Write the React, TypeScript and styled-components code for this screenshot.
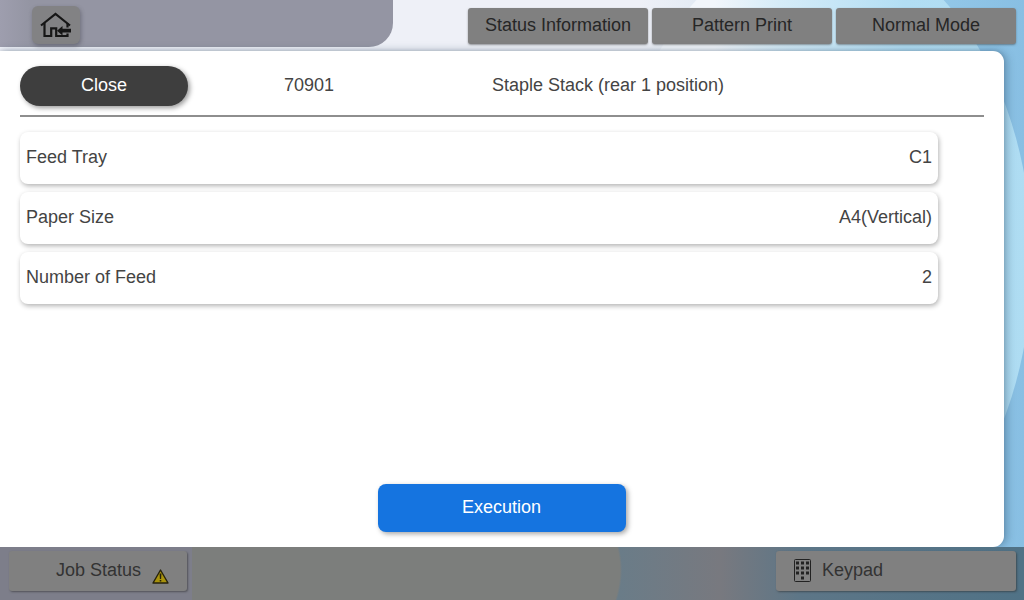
import React from "react";
import styled, { createGlobalStyle } from "styled-components";

const Global = createGlobalStyle`
  html, body { margin: 0; padding: 0; width: 1024px; height: 600px; overflow: hidden; }
  body { font-family: "Liberation Sans", Arial, sans-serif; }
`;

const Screen = styled.div`
  width: 1024px;
  height: 600px;
  display: grid;
  grid-template-rows: 51px 496px 53px;
  background: linear-gradient(90deg, #eef0f7 0 640px, #dfe9f3 720px, #98cbea 900px, #88bfe3 1024px);
  position: relative;
  overflow: hidden;

  &::before {
    content: "";
    position: absolute;
    left: 608px;
    top: -60px;
    width: 424px;
    height: 640px;
    border-radius: 50%;
    background: linear-gradient(90deg, #f2f6fb 25%, #d6ecf8 40%, #b2def4 70%, #aedcf2 100%);
  }
`;

const TopBar = styled.header`
  display: flex;
  justify-content: space-between;
  align-items: flex-start;
  padding-right: 8px;
  position: relative;
`;

const HomeTab = styled.div`
  width: 393px;
  height: 47px;
  box-sizing: border-box;
  padding: 6px 0 0 32px;
  background: linear-gradient(90deg, #9e9eae 0, #9495a3 30px);
  border-bottom-right-radius: 24px;
`;

const HomeButton = styled.button`
  width: 48px;
  height: 38px;
  padding: 0;
  border: 0;
  border-radius: 6px;
  background: #828284;
  box-shadow: 1px 2px 4px rgba(60, 60, 70, 0.45);
  display: flex;
  align-items: center;
  justify-content: center;
`;

const TopActions = styled.nav`
  display: flex;
  gap: 4px;
  padding-top: 8px;
`;

const TopButton = styled.button`
  width: 180px;
  height: 36px;
  padding: 0 0 2px;
  border: 0;
  border-radius: 3px;
  background: #808080;
  box-shadow: 0 1px 2px rgba(60, 60, 60, 0.5);
  color: #262626;
  font: 18px "Liberation Sans", Arial, sans-serif;
`;

const Panel = styled.main`
  width: 1004px;
  box-sizing: border-box;
  background: #fff;
  border-radius: 0 11px 11px 0;
  box-shadow: 3px 0 8px rgba(30, 60, 90, 0.35), 0 -1px 3px rgba(30, 40, 60, 0.12);
  padding: 15px 20px;
  display: flex;
  flex-direction: column;
  position: relative;
  z-index: 1;
`;

const Header = styled.div`
  display: flex;
  align-items: flex-start;
  height: 49px;
  border-bottom: 2px solid #8e8e8e;
`;

const CloseButton = styled.button`
  width: 168px;
  height: 40px;
  padding: 0 0 2px;
  border: 0;
  border-radius: 20px;
  background: #3e3e3e;
  box-shadow: 2px 2px 5px rgba(0, 0, 0, 0.4);
  color: #fff;
  font: 18px "Liberation Sans", Arial, sans-serif;
`;

const HeaderText = styled.span`
  font-size: 18px;
  line-height: 38px;
  color: #444;
`;

const HeaderId = styled(HeaderText)`
  margin-left: 96px;
  width: 208px;
`;

const Rows = styled.div`
  display: flex;
  flex-direction: column;
  gap: 8px;
  width: 918px;
  margin-top: 15px;
`;

const Row = styled.div`
  height: 52px;
  box-sizing: border-box;
  padding: 0 6px 2px;
  background: #fff;
  border-radius: 8px;
  box-shadow: 1px 2px 5px rgba(0, 0, 0, 0.3);
  display: flex;
  align-items: center;
  justify-content: space-between;
  font-size: 18px;
  color: #444;
`;

const Footer = styled.div`
  margin-top: auto;
  display: flex;
  justify-content: center;
`;

const ExecuteButton = styled.button`
  width: 248px;
  height: 48px;
  padding: 0 1px 2px 0;
  border: 0;
  border-radius: 8px;
  background: #1574e0;
  box-shadow: 2px 2px 5px rgba(0, 0, 0, 0.35);
  color: #fff;
  font: 18px "Liberation Sans", Arial, sans-serif;
`;

const BottomBar = styled.footer`
  display: flex;
  justify-content: space-between;
  align-items: flex-start;
  padding: 4px 8px 0 9px;
  position: relative;
  z-index: 1;
  background:
    linear-gradient(90deg, #7d7e8a 0 192px, transparent 192px),
    radial-gradient(ellipse 430px 200px at 192px 23px, #7c7e7c 99.5%, transparent 100%),
    linear-gradient(90deg, #6a7c88 620px, #78797f 720px, #5d7687 800px, #507286 1024px);
`;

const BottomButton = styled.button`
  height: 40px;
  box-sizing: border-box;
  border: 0;
  border-radius: 3px;
  background: #808080;
  box-shadow: 1px 1px 2px rgba(40, 40, 40, 0.5);
  color: #333;
  font: 18px "Liberation Sans", Arial, sans-serif;
  display: flex;
  align-items: center;
`;

const JobButton = styled(BottomButton)`
  width: 178px;
  padding: 0 0 2px 47px;
  gap: 11px;
`;

const KeypadButton = styled(BottomButton)`
  width: 240px;
  padding: 0 0 2px 18px;
  gap: 11px;
`;

const WarnMark = styled.svg`
  margin-top: 13px;
`;

const KeypadMark = styled.svg`
  margin-top: 1px;
`;

const HomeIcon = () => (
  <svg width="32" height="26" viewBox="0 0 32 26" fill="none" stroke="#161616" strokeWidth="2.2">
    <path d="M1 13.5 L15.5 2 L30 13.5" />
    <path d="M4.5 11 V24 H11.2 V16.3 H16.2 V24 H27.5 V21.5 M27.5 15.5 V11" />
    <path d="M17 18.7 L22.5 14 V16.8 H31 V20.6 H22.5 V23.4 Z" fill="#161616" stroke="none" />
  </svg>
);

const WarnIcon = () => (
  <WarnMark width="17" height="15" viewBox="0 0 17 15">
    <path d="M8.5 1 L16 14 H1 Z" fill="#a8920c" stroke="#26220c" strokeWidth="1.4" strokeLinejoin="round" />
    <path d="M7.6 4.6 H9.4 L9.1 10 H7.9 Z M7.7 11 H9.3 V12.6 H7.7 Z" fill="#26220c" />
  </WarnMark>
);

const KeypadIcon = () => (
  <KeypadMark width="17" height="23" viewBox="0 0 17 23" fill="#222">
    <rect x="0.5" y="0.5" width="16" height="22" rx="1" fill="none" stroke="#222" />
    {[2.5, 7.5, 12.5].map((y) =>
      [2, 7, 12].map((x) => <rect key={`${x}-${y}`} x={x} y={y} width="3" height="3" />)
    )}
    <rect x="7" y="17.5" width="3" height="3" />
  </KeypadMark>
);

const rows = [
  ["Feed Tray", "C1"],
  ["Paper Size", "A4(Vertical)"],
  ["Number of Feed", "2"],
];

export default function App() {
  return (
    <Screen>
      <Global />
      <TopBar>
        <HomeTab>
          <HomeButton aria-label="Home">
            <HomeIcon />
          </HomeButton>
        </HomeTab>
        <TopActions>
          <TopButton>Status Information</TopButton>
          <TopButton>Pattern Print</TopButton>
          <TopButton>Normal Mode</TopButton>
        </TopActions>
      </TopBar>
      <Panel>
        <Header>
          <CloseButton>Close</CloseButton>
          <HeaderId>70901</HeaderId>
          <HeaderText>Staple Stack (rear 1 position)</HeaderText>
        </Header>
        <Rows>
          {rows.map(([label, value]) => (
            <Row key={label}>
              <span>{label}</span>
              <span>{value}</span>
            </Row>
          ))}
        </Rows>
        <Footer>
          <ExecuteButton>Execution</ExecuteButton>
        </Footer>
      </Panel>
      <BottomBar>
        <JobButton>
          Job Status
          <WarnIcon />
        </JobButton>
        <KeypadButton>
          <KeypadIcon />
          Keypad
        </KeypadButton>
      </BottomBar>
    </Screen>
  );
}
